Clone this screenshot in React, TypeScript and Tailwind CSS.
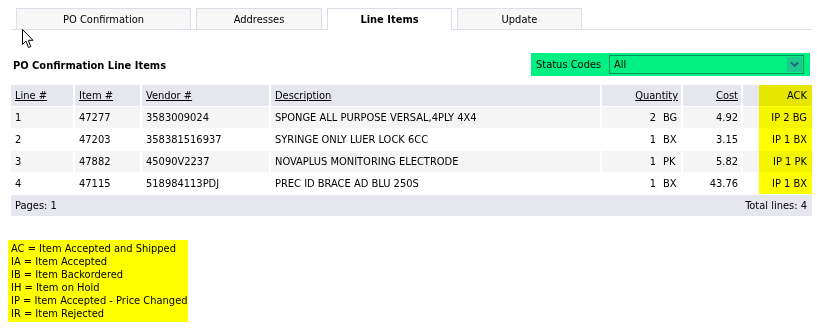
import React from 'react'

type Row = {
  line: string
  item: string
  vendor: string
  desc: string
  qty: string
  unit: string
  cost: string
  ack: string
}

const rows: Row[] = [
  { line: '1', item: '47277', vendor: '3583009024', desc: 'SPONGE ALL PURPOSE VERSAL,4PLY 4X4', qty: '2', unit: 'BG', cost: '4.92', ack: 'IP 2 BG' },
  { line: '2', item: '47203', vendor: '358381516937', desc: 'SYRINGE ONLY LUER LOCK 6CC', qty: '1', unit: 'BX', cost: '3.15', ack: 'IP 1 BX' },
  { line: '3', item: '47882', vendor: '45090V2237', desc: 'NOVAPLUS MONITORING ELECTRODE', qty: '1', unit: 'PK', cost: '5.82', ack: 'IP 1 PK' },
  { line: '4', item: '47115', vendor: '518984113PDJ', desc: 'PREC ID BRACE AD BLU 250S', qty: '1', unit: 'BX', cost: '43.76', ack: 'IP 1 BX' },
]

const legend = [
  'AC = Item Accepted and Shipped',
  'IA = Item Accepted',
  'IB = Item Backordered',
  'IH = Item on Hold',
  'IP = Item Accepted - Price Changed',
  'IR = Item Rejected',
]

const cols = 'grid grid-cols-[62px_65px_127px_329px_79px_58px_69px] gap-x-[2px]'

const Tab: React.FC<{ label: string; width: string; active?: boolean }> = ({ label, width, active }) => (
  <div
    className={`${width} flex items-center justify-center border-t border-x border-[#dedee8] ${
      active ? 'h-[22px] -mb-px bg-white font-bold' : 'h-[21px] bg-[#f7f7f8]'
    }`}
  >
    {label}
  </div>
)

const Cursor: React.FC = () => (
  <svg className="absolute left-[22px] top-[29px]" width="13" height="20" viewBox="0 0 13 20">
    <path d="M0.5 0.5 L0.5 15.5 L4 12 L6.5 18.5 L8.8 17.5 L6.3 11.3 L11 11.3 Z" fill="#fff" stroke="#000" strokeWidth="1" strokeLinejoin="miter" />
  </svg>
)

export default function App() {
  return (
    <div
      className="relative w-[817px] h-[330px] bg-white text-black text-[11px] leading-[13px] overflow-hidden"
      style={{ fontFamily: '"DejaVu Sans Condensed", "DejaVu Sans", sans-serif' }}
    >
      {/* tabs */}
      <div className="ml-[11px] w-[801px] pt-[8px] pl-[5px] flex gap-[5px] border-b border-[#dedee8] items-end">
        <Tab label="PO Confirmation" width="w-[175px]" />
        <Tab label="Addresses" width="w-[126px]" />
        <Tab label="Line Items" width="w-[125px]" active />
        <Tab label="Update" width="w-[125px]" />
      </div>

      {/* title + status filter */}
      <div className="mt-[23px] ml-[13px] mr-[7px] h-[23px] flex items-center justify-between">
        <div className="font-bold pt-[1px]">PO Confirmation Line Items</div>
        <div className="w-[279px] h-[23px] bg-[#00f084] flex items-center pl-[5px] pr-[6px]">
          <span className="w-[73px]">Status Codes</span>
          <div className="flex-1 h-[19px] border border-[#0b8f5c] flex items-center justify-between pl-[4px] pr-px">
            <span>All</span>
            <div className="w-[15px] h-[15px] bg-[#1cc88e] flex items-center justify-center">
              <svg width="9" height="7" viewBox="0 0 9 7">
                <path d="M1 1.5 L4.5 5 L8 1.5" fill="none" stroke="#2e5f7a" strokeWidth="1.8" />
              </svg>
            </div>
          </div>
        </div>
      </div>

      {/* table */}
      <div className="relative mt-[9px] ml-[11px] w-[801px] flex flex-col gap-y-px">
        <div className={`${cols} h-[21px]`}>
          {['Line #', 'Item #', 'Vendor #', 'Description'].map((h) => (
            <div key={h} className="bg-[#e6e6ee] flex items-center pl-[4px]">
              <span className="underline">{h}</span>
            </div>
          ))}
          <div className="bg-[#e6e6ee] flex items-center justify-end pr-[3px]">
            <span className="underline">Quantity</span>
          </div>
          <div className="bg-[#e6e6ee] flex items-center justify-end pr-[3px]">
            <span className="underline">Cost</span>
          </div>
          <div className="bg-[#e6e6ee] flex items-center justify-end pr-[5px]">ACK</div>
        </div>

        {rows.map((r, i) => {
          const bg = i % 2 === 0 ? 'bg-[#f5f5f5]' : 'bg-white'
          return (
            <div key={r.line} className={`${cols} h-[21px]`}>
              <div className={`${bg} flex items-center pl-[4px]`}>{r.line}</div>
              <div className={`${bg} flex items-center pl-[4px]`}>{r.item}</div>
              <div className={`${bg} flex items-center pl-[4px]`}>{r.vendor}</div>
              <div className={`${bg} flex items-center pl-[4px]`}>{r.desc}</div>
              <div className={`${bg} flex items-center justify-end pr-[3px]`}>
                <span>{r.qty}</span>
                <span className="ml-[7px] w-[15px]">{r.unit}</span>
              </div>
              <div className={`${bg} flex items-center justify-end pr-[3px]`}>{r.cost}</div>
              <div className={`${bg} flex items-center justify-end pr-[5px]`}>{r.ack}</div>
            </div>
          )
        })}

        <div className="h-[21px] bg-[#e6e6ee] flex items-center justify-between pl-[4px] pr-[5px]">
          <span>Pages: 1</span>
          <span>Total lines: 4</span>
        </div>

        {/* highlight over the ACK column */}
        <div className="absolute right-0 top-0 w-[53px] h-[109px] bg-[#ffff00] mix-blend-multiply" />
      </div>

      {/* legend */}
      <div className="mt-[24px] ml-[8px] w-[180px] bg-[#ffff00] pl-[3px] py-[2px] leading-[13px]">
        {legend.map((l) => (
          <div key={l}>{l}</div>
        ))}
      </div>

      <Cursor />
    </div>
  )
}
